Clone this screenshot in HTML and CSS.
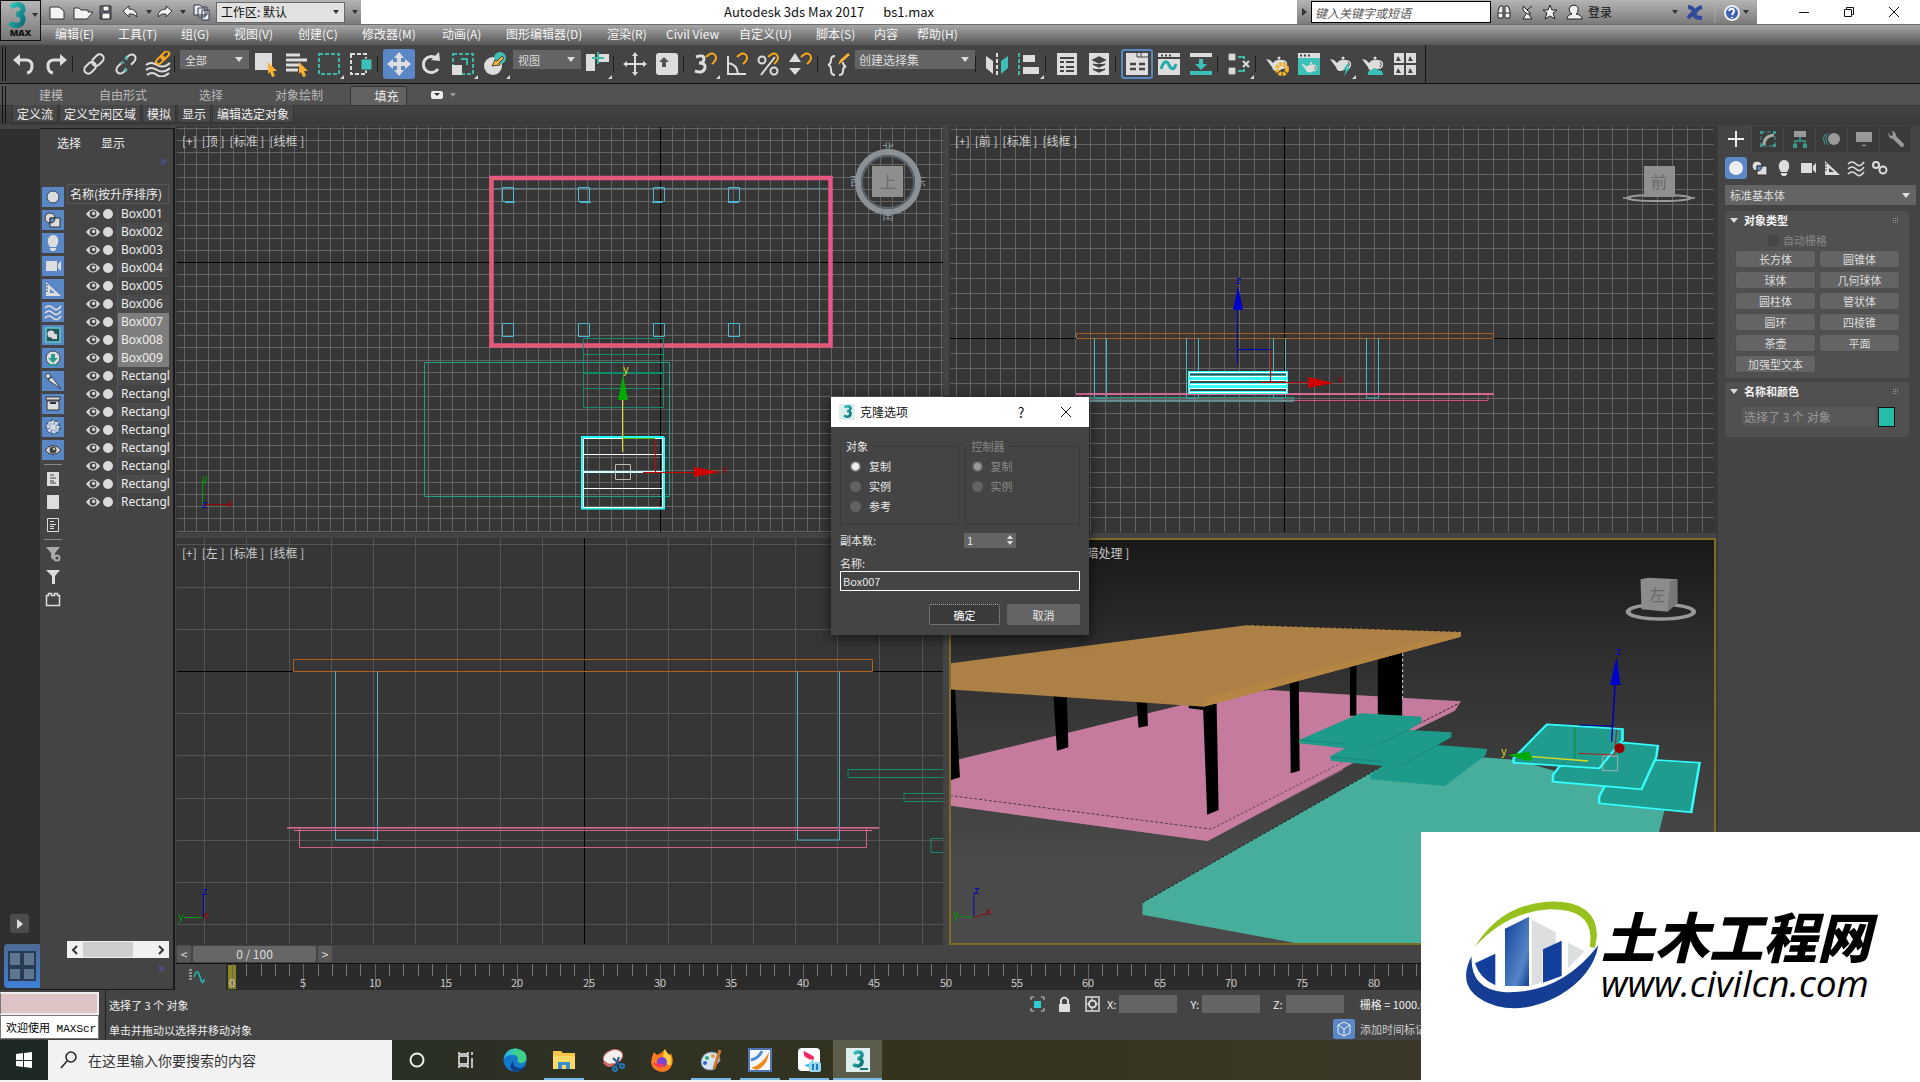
FILE: index.html
```html
<!DOCTYPE html>
<html lang="zh-CN">
<head>
<meta charset="utf-8">
<title>Autodesk 3ds Max 2017 - bs1.max</title>
<link rel="stylesheet" href="styles.css">
</head>
<body>
<svg class="defs" aria-hidden="true">
  <defs>
    <linearGradient id="teal" x1="0" y1="0" x2="1" y2="1"><stop offset="0" stop-color="#35c5bd"/><stop offset="1" stop-color="#0a6f78"/></linearGradient>
    <symbol id="eye" viewBox="0 0 14 10"><path d="M0 5Q7-4 14 5Q7 14 0 5Z" fill="#d8d8d8"/><circle cx="7" cy="5" r="3.400" fill="#444"/><circle cx="7.600" cy="4.400" r="1.600" fill="#d8d8d8"/></symbol>
    <symbol id="dot" viewBox="0 0 10 10"><circle cx="5" cy="5" r="5" fill="#dadada"/></symbol>
    <symbol id="three" viewBox="0 0 24 30"><path d="M5 6Q11 1 17 4Q21 8 17 12Q15 14 11 14Q18 14 19 19Q19 26 12 27Q7 27 4 24" fill="none" stroke="url(#teal)" stroke-width="6"/></symbol>
    <symbol id="teapot" viewBox="0 0 26 26"><path d="M2 8l4 1 3 3Q12 8 18 9Q24 9 23 15Q22 18 18 18q-2 2-6 2Q9 20 8 16Z" fill="#ddd"/><circle cx="15" cy="7" r="1.500" fill="#ddd"/><path d="M20 11q3 2 0 5" stroke="#444" fill="none"/></symbol>
    <symbol id="shapes" viewBox="0 0 22 20"><circle cx="8" cy="8" r="5" fill="#ddd" stroke="#333"/><path d="M8 8h10v9H8z" fill="#ddd" stroke="#333"/><path d="M8 8v5q5 0 5-5z" fill="#5b8bc8" stroke="#333"/></symbol>
    <symbol id="bulb" viewBox="0 0 22 20"><path d="M8 14Q5 10 6 6Q8 2 11 2Q15 2 16 6Q17 10 14 14Z" fill="#ddd"/><path d="M8 15h6v2h-1v1h-4v-1H8z" fill="#ddd"/></symbol>
    <symbol id="camera" viewBox="0 0 22 20"><path d="M4 5h11v10H4zM16 8l3-3v10l-3-3z" fill="#ddd"/></symbol>
    <symbol id="ruler" viewBox="0 0 22 20"><path fill-rule="evenodd" d="M4 3l15 14H4zM8 10v4h5z" fill="#ddd"/><path d="M4 6h2M4 9h2M4 12h2" stroke="#444"/></symbol>
    <symbol id="waves" viewBox="0 0 22 20"><path d="M3 6q4-4 8 0t8-2M3 11q4-4 8 0t8-2M3 16q4-4 8 0t8-2" fill="none" stroke="#ddd" stroke-width="1.600"/></symbol>
  </defs>
</svg>

<header class="head">
  <button class="app" aria-label="应用程序"><svg width="24" height="26"><use href="#three"/></svg><i class="caret dark"></i><b>MAX</b></button>
  <div class="title">
    <div class="qat">
      <svg width="94" height="22" viewBox="0 0 94 22"><g fill="#f4f4f4" stroke="#333"><path d="M1 6h9l5 4v8H1z"/><path d="M25 7h5l2 2h7v2h5l-6 7H25z"/><path d="M51 5h11v13H51z" fill="#667"/><path d="M54 5h6v5h-6zM53 12h8v6h-8z"/><path d="M74 10l6-5v3q8 0 8 8q-3-4-8-3v3z"/></g></svg>
      <i class="caret dark"></i>
      <svg width="22" height="22" viewBox="0 0 22 22"><path d="M17 10l-6-5v3q-8 0-8 8q3-4 8-3v3z" fill="#f4f4f4" stroke="#333"/></svg>
      <i class="caret dark"></i>
      <svg class="proj" width="20" height="22" viewBox="0 0 20 22"><g fill="#e8eef5" stroke="#334"><path d="M1 4h6l2 2h5v8H1zM5 7h7v9H5zM9 9h7v10H9z"/></g></svg>
      <button class="workspace">工作区: 默认<i class="caret dark"></i></button>
      <i class="caret dark bar"></i>
    </div>
    <h1><span>Autodesk 3ds Max 2017</span><span>bs1.max</span></h1>
    <div class="info">
      <i class="tri"></i>
      <input type="text" placeholder="键入关键字或短语" aria-label="搜索">
      <svg class="links" width="94" height="22" viewBox="0 0 94 22"><g fill="#f2f2f2" stroke="#222"><path d="M4 17v-7l2-5h3v12zM11 17V5h3l2 5v7z"/><path d="M4 12h5M11 12h5"/><path d="M29 5q-1 8 8 8zM32 13l-3 5h9l-3-4M33 9l5-4"/><path d="M56 4l2 5h5l-4 3 2 6-5-3-5 3 2-6-4-3h5z"/><path d="M73 18q0-4 5-5q-3-2-3-5q1-4 5-4q5 1 4 5q0 3-2 4q6 1 6 5z"/></g></svg>
      <span class="login">登录</span><i class="caret dark"></i>
      <svg class="links" width="62" height="22" viewBox="0 0 62 22"><path d="M7 6q5 0 6 5l-6 6M21 6q-5 1-7 6t7 5" fill="none" stroke="#2f4a9c" stroke-width="4"/><path d="M34 3v18" stroke="#aaa"/><circle cx="51" cy="12" r="7" fill="#3b62b5" stroke="#eee" stroke-width="2"/><path d="M48 10q1-3 4-2q2 2 0 4l-1 2M51 16v1" stroke="#fff" stroke-width="2" fill="none"/></svg>
      <i class="caret dark"></i>
    </div>
    <div class="win">
      <button aria-label="最小化"><svg width="12" height="12"><path d="M1 6.500h10" stroke="#111"/></svg></button>
      <button aria-label="还原"><svg width="12" height="12"><path d="M1.500 3.500h7v7h-7zM3.500 3v-1.500h7v7H9" fill="none" stroke="#111"/></svg></button>
      <button aria-label="关闭"><svg width="12" height="12"><path d="M1 1l10 10M11 1L1 11" stroke="#111"/></svg></button>
    </div>
  </div>
  <nav class="menu"><a href="#">编辑(E)</a><a href="#">工具(T)</a><a href="#">组(G)</a><a href="#">视图(V)</a><a href="#">创建(C)</a><a href="#">修改器(M)</a><a href="#">动画(A)</a><a href="#">图形编辑器(D)</a><a href="#">渲染(R)</a><a href="#">Civil View</a><a href="#">自定义(U)</a><a href="#">脚本(S)</a><a href="#">内容</a><a href="#">帮助(H)</a></nav>
</header>

<div class="tools">
  <i class="grip"></i>
  <div class="toolset">
  <button aria-label="撤消"><svg viewBox="0 0 26 26"><path d="M7 9h8q6 0 6 6t-5 7" class="s3"/><path d="M2 9l7-6v12z" class="f"/></svg></button>
  <button aria-label="重做"><svg viewBox="0 0 26 26"><path d="M19 9h-8q-6 0-6 6t5 7" class="s3"/><path d="M24 9l-7-6v12z" class="f"/></svg></button>
  <i class="sep"></i>
  <button aria-label="链接"><svg viewBox="0 0 26 26"><g transform="rotate(-45 13 13)" class="s"><rect x="1" y="9" width="13" height="8" rx="4"/><rect x="12" y="9" width="13" height="8" rx="4"/></g></svg></button>
  <button aria-label="断开"><svg viewBox="0 0 26 26"><g transform="rotate(-45 13 13)" class="s"><path d="M10 9H5q-4 1-4 4t4 4h5M16 9h5q4 1 4 4t-4 4h-5"/></g><path d="M13 5l1 4M12 17l1 4M8 11l3 1" class="st"/></svg></button>
  <button aria-label="绑定"><svg viewBox="0 0 26 26"><path d="M1 14q5-4 11 0t13-2M1 19q5-4 11 0t13-2M2 24q5-4 10 0t12-2" class="s"/><g transform="rotate(-45 18 7)" class="sy"><rect x="10" y="4" width="9" height="5" rx="2"/><rect x="17" y="4" width="9" height="5" rx="2"/></g></svg></button>
  <i class="sep"></i>
  <button class="combo c1">全部<i class="caret"></i></button>
  <button aria-label="选择"><svg viewBox="0 0 26 26"><path d="M3 2h17v17H3z" class="f"/><path d="M16 11l9 9h-4l2 5-3 1-2-5-2 2z" class="fy"/></svg></button>
  <button aria-label="按名称选择"><svg viewBox="0 0 26 26"><path d="M2 4h14M2 9h21M2 14h13M2 19h12" class="s3"/><path d="M15 11l9 9h-4l2 5-3 1-2-5-2 2z" class="fy"/></svg></button>
  <button aria-label="矩形区域"><svg viewBox="0 0 26 26"><path d="M3 3h20v20H3z" class="st" stroke-dasharray="4 2"/></svg><em></em></button>
  <button aria-label="窗口交叉"><svg viewBox="0 0 26 26"><path d="M3 3h15v20H3z" class="s" stroke-dasharray="4 2"/><path d="M13 8h11v11H13z" class="ft" stroke="#444"/></svg></button>
  <i class="sep"></i>
  <button class="on" aria-label="移动"><svg viewBox="0 0 26 26"><path d="M13 1l5 6h-3v4h4V8l6 5-6 5v-3h-4v4h3l-5 6-5-6h3v-4H7v3l-6-5 6-5v3h4V7H8z" class="f"/></svg></button>
  <button aria-label="旋转"><svg viewBox="0 0 26 26"><path d="M20 18a8 8 0 1 1-2-11" class="s3"/><path d="M13 9l9 1-1-9z" class="f"/></svg></button>
  <button aria-label="缩放"><svg viewBox="0 0 26 26"><path d="M3 3h20v20H3z" class="st" stroke-dasharray="4 2"/><path d="M2 14h10v10H2z" class="f"/><path d="M11 8h6v6" class="st"/></svg><em></em></button>
  <button aria-label="放置"><svg viewBox="0 0 26 26"><circle cx="11" cy="15" r="9" class="f"/><circle cx="18" cy="7" r="6" class="ft"/><path d="M10 15l3-6 2 1 5-5 2 2-5 5 1 2z" class="fy" stroke="#444"/></svg><em></em></button>
  <button class="combo c2">视图<i class="caret"></i></button>
  <button aria-label="轴心"><svg viewBox="0 0 26 26"><path d="M2 3h9v17H2zM14 3h11v8H14z" class="f"/><path d="M14 1v12M8 7h12" class="st"/></svg><em></em></button>
  <i class="sep"></i>
  <button aria-label="操纵"><svg viewBox="0 0 26 26"><path d="M13 4v18M4 13h18" class="s"/><path d="M13 1l3 4h-6zM13 25l3-4h-6zM1 13l4-3v6zM25 13l-4-3v6z" class="f"/><path d="M10 10h6v6h-6z" fill="#444"/><path d="M13 9v8M9 13h8" class="s"/></svg></button>
  <button aria-label="键盘"><svg viewBox="0 0 26 26"><rect x="2" y="2" width="22" height="22" rx="3" class="f"/><path d="M10 6l5 5h-3v5H8v-5H5z" fill="#555"/></svg></button>
  <i class="sep"></i>
  <button aria-label="捕捉"><svg viewBox="0 0 26 26"><path d="M4 6q8-3 8 2q0 4-5 4q7 0 6 5q-2 6-10 3" class="s3"/><path d="M14 6q6-6 9-2t-3 9" class="sy"/></svg><em></em></button>
  <button aria-label="角度"><svg viewBox="0 0 26 26"><path d="M4 5v18h18M4 12q9 1 10 11" class="s"/><path d="M13 6q6-6 9-2t-3 9" class="sy"/></svg></button>
  <button aria-label="百分比"><svg viewBox="0 0 26 26"><circle cx="6" cy="9" r="3.500" class="s"/><circle cx="18" cy="20" r="3.500" class="s"/><path d="M19 6L5 24" class="s"/><path d="M12 6q6-6 9-2t-3 9" class="sy"/></svg></button>
  <button aria-label="微调器"><svg viewBox="0 0 26 26"><path d="M7 2l6 9H1zM7 24l6-7H1z" class="f"/><path d="M13 6q6-6 9-2t-3 9" class="sy"/></svg></button>
  <i class="sep"></i>
  <button aria-label="选择集"><svg viewBox="0 0 26 26"><path d="M9 5q-4 0-4 4t-3 5q3 0 3 5t4 5M13 24q4 0 4-4t3-5q-3 0-3-4" class="s"/><path d="M12 14l2-5 8-7 2 2-8 7z" class="fy"/></svg></button>
  <button class="combo c3">创建选择集<i class="caret"></i></button>
  <i class="sep"></i>
  <button aria-label="镜像"><svg viewBox="0 0 26 26"><path d="M2 5l7 5v13l-7-6z" class="f"/><path d="M24 5l-7 5v13l7-6z" class="ft"/><path d="M13 2v23" class="s" stroke-dasharray="4 2"/></svg></button>
  <button aria-label="对齐"><svg viewBox="0 0 26 26"><path d="M3 2v23" class="st" stroke-dasharray="4 2"/><path d="M7 4h12v7H7zM7 16h16v7H7z" class="f"/></svg><em></em></button>
  <i class="sep"></i>
  <button aria-label="场景资源管理器"><svg viewBox="0 0 26 26"><path d="M3 2h20v22H3z" class="f"/><path d="M6 7h14M6 11h4M12 11h8M6 16h4M12 16h8M6 20h4M12 20h8" stroke="#444" stroke-width="2"/></svg></button>
  <button aria-label="层"><svg viewBox="0 0 26 26"><path d="M3 2h20v22H3z" class="f"/><path d="M13 6l6 3-6 3-6-3zM7 13l6 3 6-3M7 18l6 3 6-3" stroke="#444" fill="#444" stroke-width="1.500"/></svg></button>
  <i class="sep"></i>
  <button class="on ring" aria-label="功能区"><svg viewBox="0 0 26 26"><path d="M2 2h22v22H2z" class="f"/><path d="M13 2v4h11M17 2v4" stroke="#444" fill="none"/><path d="M6 13h6M15 13h6M6 18h6M15 18h6" stroke="#444" stroke-width="2.500"/></svg></button>
  <button aria-label="曲线编辑器"><svg viewBox="0 0 26 26"><path d="M2 2h22v22H2z" class="f"/><path d="M2 7h22M5 4.500h2M9 4.500h2M13 4.500h2" stroke="#444" stroke-width="2"/><path d="M5 18q4-12 8-4t7-1" stroke="#2aa" fill="none" stroke-width="3"/></svg></button>
  <button aria-label="摄影表"><svg viewBox="0 0 26 26"><path d="M2 2h22v4H2z" class="f"/><path d="M2 20h22v4H2zM11 8h4v5h4l-6 6-6-6h4z" class="ft"/></svg></button>
  <i class="sep"></i>
  <button aria-label="图解视图"><svg viewBox="0 0 26 26"><g class="s" stroke-width="1.500"><circle cx="6" cy="6" r="2.500"/><circle cx="6" cy="20" r="2.500"/><path d="M3 3l6 6M9 3L3 9M3 17l6 6M9 17l-6 6M17 10l6 6M23 10l-6 6"/></g><path d="M12 6h6v2M12 20h6v-2" class="st"/></svg><em></em></button>
  <i class="sep"></i>
  <button aria-label="渲染设置"><svg viewBox="0 0 26 26"><use href="#teapot"/><circle cx="18" cy="18" r="5" fill="none" stroke="#f5b52a" stroke-width="4" stroke-dasharray="3 1"/></svg></button>
  <button aria-label="渲染帧窗口"><svg viewBox="0 0 26 26"><path d="M2 2h22v22H2z" class="ft"/><path d="M2 2h22v5H2z" class="f"/><path d="M4 4.500h2M8 4.500h2M12 4.500h2" stroke="#444" stroke-width="2"/><use href="#teapot" x="4" y="7" width="19" height="19"/></svg></button>
  <button aria-label="渲染"><svg viewBox="0 0 26 26"><use href="#teapot"/><path d="M19 13l-4 6h3l-2 6 6-8h-3l2-4z" class="ft"/></svg><em></em></button>
  <button aria-label="云渲染"><svg viewBox="0 0 26 26"><use href="#teapot"/><path d="M8 24q-1-4 3-5q4-4 7 0q5 0 5 5z" class="ft"/></svg></button>
  <button aria-label="库"><svg viewBox="0 0 26 26"><path d="M2 2h10v10H2zM14 2h10v10H14zM2 14h10v10H2zM14 14h10v10H14z" class="f"/><path d="M4 10l2-5 3 5zM16 10l2-5 3 5zM4 22l2-5 3 5zM16 22l2-5 3 5z" fill="#444"/></svg></button>
  </div>
</div>

<div class="ribbon">
  <i class="grip"></i>
  <div class="tabs"><button>建模</button><button>自由形式</button><button>选择</button><button>对象绘制</button><button class="cur">填充</button><i class="pill"></i><i class="caret"></i></div>
  <div class="cmds"><button>定义流</button><button>定义空闲区域</button><button>模拟</button><button>显示</button><button>编辑选定对象</button></div>
</div>

<main class="main">
  <aside class="strip">
    <button class="play" aria-label="播放"><i></i></button>
    <button class="layout" aria-label="布局"><svg width="32" height="38" viewBox="0 0 32 38"><path d="M3 5h12v14H3zM17 5h12v14H17zM3 21h12v12H3zM17 21h12v12H17z" fill="#5f7690" stroke="#2a3a50" stroke-width="2"/></svg></button>
  </aside>

  <section class="explorer">
    <div class="extop"><a href="#">选择</a><a href="#">显示</a></div>
    <span class="more">»</span>
    <div class="exbody">
      <div class="filters">
        <button class="b"><svg viewBox="0 0 22 20"><circle cx="11" cy="10" r="6" fill="#ddd" stroke="#345"/></svg></button>
        <button class="b"><svg viewBox="0 0 22 20"><use href="#shapes"/></svg></button>
        <button class="b"><svg viewBox="0 0 22 20"><use href="#bulb"/></svg></button>
        <button class="b"><svg viewBox="0 0 22 20"><use href="#camera"/></svg></button>
        <button class="b"><svg viewBox="0 0 22 20"><use href="#ruler"/></svg></button>
        <button class="b"><svg viewBox="0 0 22 20"><use href="#waves"/></svg></button>
        <button class="b"><svg viewBox="0 0 22 20"><path d="M4 3h14v14H4z" fill="#2a5560" stroke="#5cd0c0" stroke-width="1.500"/><circle cx="9" cy="9" r="3.500" fill="#ddd"/><path d="M10 9h5v5h-5z" fill="#ddd"/></svg></button>
        <button class="b"><svg viewBox="0 0 22 20"><circle cx="11" cy="10" r="7" fill="#ddd" stroke="#345"/><path d="M9 6h4v4h3l-5 5-5-5h3zM6 16h10v2H6z" fill="#299c8a"/></svg></button>
        <button class="b"><svg viewBox="0 0 22 20"><circle cx="6" cy="5" r="2.500" fill="#ddd" stroke="#345"/><path d="M6 9l4-3 9 12z" fill="#ddd" stroke="#345"/></svg></button>
        <button class="b"><svg viewBox="0 0 22 20"><path d="M4 3h14v3H4zM5 7h12v9H5z" fill="#ddd" stroke="#333"/><path d="M8 9h6" stroke="#333" stroke-width="2"/></svg></button>
        <button class="b"><svg viewBox="0 0 22 20"><path d="M11 3v14M4 10h14M6 5l10 10M16 5L6 15" stroke="#ddd" stroke-width="1.500"/><circle cx="11" cy="10" r="5" fill="none" stroke="#ddd" stroke-width="2" stroke-dasharray="3 2"/><circle cx="11" cy="10" r="7" fill="none" stroke="#345" stroke-dasharray="3 2"/></svg></button>
        <button class="b"><svg viewBox="0 0 22 20"><path d="M3 10q8-9 16 0q-8 9-16 0z" fill="#ddd" stroke="#333"/><circle cx="11" cy="10" r="3.500" fill="#444"/><circle cx="12" cy="9" r="1" fill="#eee"/></svg></button>
        <hr>
        <button><svg viewBox="0 0 22 20"><path d="M5 3h12v14H5z" fill="#ddd"/><path d="M8 6h4M8 9h6M8 12h4M8 14h6" stroke="#444"/></svg></button>
        <button><svg viewBox="0 0 22 20"><path d="M5 3h12v14H5z" fill="#ddd"/></svg></button>
        <button><svg viewBox="0 0 22 20"><path d="M5.500 3.500h11v13h-11zM8 6.500h4M8 9.500h6M8 11.500h4M8 13.500h4" fill="none" stroke="#ddd"/></svg></button>
        <hr>
        <button><svg viewBox="0 0 22 20"><path d="M4 3h14l-5 6v8l-4-3V9z" fill="#aaa"/><circle cx="15" cy="14" r="2.500" fill="none" stroke="#aaa" stroke-width="2"/></svg></button>
        <button><svg viewBox="0 0 22 20"><path d="M4 3h14l-5 6v8h-3V9z" fill="#ddd"/></svg></button>
        <button><svg viewBox="0 0 22 20"><path d="M4.500 5.500h2v-2h3v2h3v-2h3v2h2v10h-13z" fill="none" stroke="#ddd" stroke-width="1.500"/></svg></button>
      </div>
      <div class="tree">
        <div class="th">名称(按升序排序)</div>
        <ul>
          <li><svg class="e"><use href="#eye"/></svg><svg class="d"><use href="#dot"/></svg><span>Box001</span></li>
          <li><svg class="e"><use href="#eye"/></svg><svg class="d"><use href="#dot"/></svg><span>Box002</span></li>
          <li><svg class="e"><use href="#eye"/></svg><svg class="d"><use href="#dot"/></svg><span>Box003</span></li>
          <li><svg class="e"><use href="#eye"/></svg><svg class="d"><use href="#dot"/></svg><span>Box004</span></li>
          <li><svg class="e"><use href="#eye"/></svg><svg class="d"><use href="#dot"/></svg><span>Box005</span></li>
          <li><svg class="e"><use href="#eye"/></svg><svg class="d"><use href="#dot"/></svg><span>Box006</span></li>
          <li class="sel"><svg class="e"><use href="#eye"/></svg><svg class="d"><use href="#dot"/></svg><span>Box007</span></li>
          <li class="sel"><svg class="e"><use href="#eye"/></svg><svg class="d"><use href="#dot"/></svg><span>Box008</span></li>
          <li class="sel"><svg class="e"><use href="#eye"/></svg><svg class="d"><use href="#dot"/></svg><span>Box009</span></li>
          <li><svg class="e"><use href="#eye"/></svg><svg class="d"><use href="#dot"/></svg><span>Rectangl</span></li>
          <li><svg class="e"><use href="#eye"/></svg><svg class="d"><use href="#dot"/></svg><span>Rectangl</span></li>
          <li><svg class="e"><use href="#eye"/></svg><svg class="d"><use href="#dot"/></svg><span>Rectangl</span></li>
          <li><svg class="e"><use href="#eye"/></svg><svg class="d"><use href="#dot"/></svg><span>Rectangl</span></li>
          <li><svg class="e"><use href="#eye"/></svg><svg class="d"><use href="#dot"/></svg><span>Rectangl</span></li>
          <li><svg class="e"><use href="#eye"/></svg><svg class="d"><use href="#dot"/></svg><span>Rectangl</span></li>
          <li><svg class="e"><use href="#eye"/></svg><svg class="d"><use href="#dot"/></svg><span>Rectangl</span></li>
          <li><svg class="e"><use href="#eye"/></svg><svg class="d"><use href="#dot"/></svg><span>Rectangl</span></li>
        </ul>
        <div class="hscroll"><svg width="8" height="10"><path d="M6 1L2 5l4 4" fill="none" stroke="#333" stroke-width="2"/></svg><i></i><svg width="8" height="10"><path d="M2 1l4 4-4 4" fill="none" stroke="#333" stroke-width="2"/></svg></div>
      </div>
    </div>
    <span class="more low">»</span>
  </section>

  <section class="stage">
    <div class="views">
      <div class="vp">
        <svg class="scene" viewBox="176 126 767 407" preserveAspectRatio="xMinYMin slice">
          <path class="grid" data-box="177 127 943 532" data-origin="660 262" data-step="12.21"/>
          <path d="M177 262.500H943M660.500 127V532" stroke="#000"/>
          <path d="M494 188.500H828M819.500 180V343" stroke="#5d7f88" fill="none"/>
          <rect x="491.500" y="178" width="339" height="167.500" fill="none" stroke="#e9568b" stroke-width="4.500"/>
          <path d="M491.500 345.500V178.500H828M494 345.500H829" fill="none" stroke="#d9624f"/>
          <g fill="none" stroke="#4fb6d2"><path d="M502.500 187.500h11v14h-11zM578.500 187.500h11v14h-11zM653.500 187.500h11v14h-11zM728.500 187.500h11v14h-11zM505 202.500h10M580 202.500h11M652 202.500h10M728 202.500h11M502.500 323.500h11v13h-11zM578.500 323.500h11v13h-11zM653.500 323.500h11v13h-11zM728.500 323.500h11v13h-11z"/></g>
          <g fill="none" stroke="#148a6c"><path d="M583.500 338.500h80v69h-80zM583 354.500h80M583 388.500h80"/><path d="M583 373h80" stroke-width="2"/><path d="M424.500 362.500h245v134h-245z" stroke="#20a084"/></g>
          <path d="M664 437V508.500H582V437H664" fill="none" stroke="#2ff" stroke-width="2"/>
          <path d="M583.500 438.500h79v69h-79zM584 454.500h79M584 488.500h79" fill="none" stroke="#fff"/><path d="M584 472h79" stroke="#cff" stroke-width="2"/>
          <path d="M655.500 440v32M643 472.500h54" stroke="#c00" fill="none"/><path d="M623 438.500h32" stroke="#6a0"/>
          <path d="M694 467l27 5-27 5z" fill="#c00"/><path d="M622.500 400v52" stroke="#dd2"/><path d="M623 375l5 25h-10z" fill="#0a0"/>
          <path d="M615.500 464.500h15v15h-15z" stroke="#bbb" fill="none"/>
          <text x="623" y="373" fill="#dd2">y</text><text x="722" y="473" fill="#900">x</text>
          <path d="M202.500 480v25" stroke="#090"/><path d="M203 504.500h28" stroke="#900"/><text x="202" y="482" fill="#090">y</text><text x="202" y="508" fill="#00b">z</text><text x="227" y="507" fill="#900">x</text>
          <circle cx="888" cy="182" r="30" fill="none" stroke="#8b9095" stroke-width="6"/><circle cx="888" cy="182" r="26" fill="none" stroke="#59636b" stroke-width="2"/>
          <path d="M872 166h31v31h-31z" fill="#8f8f8f"/><g class="cube"><text x="888" y="188">上</text></g>
          <g class="dir"><text x="888" y="153">北</text><text x="888" y="220">南</text><text x="856" y="186">西</text><text x="920" y="186">东</text></g>
        </svg>
        <div class="vl"><span>[+]</span><span>[顶 ]</span><span>[标准 ]</span><span>[线框 ]</span></div>
      </div>
      <div class="vp">
        <svg class="scene" viewBox="949 126 767 407" preserveAspectRatio="xMinYMin slice">
          <path class="grid" data-box="950 127 1714 532" data-origin="1284 338" data-step="14.93"/>
          <path d="M950 338.500H1714M1284.500 127V532" stroke="#000"/>
          <path d="M1076.500 333.500h417v5h-417z" fill="none" stroke="#b0601c"/>
          <g fill="none" stroke="#3fb9c4"><path d="M1094.500 338v60h12v-60M1186.500 338v60h12v-60M1273.500 338v60h12v-60M1366.500 338v60h12v-60"/></g>
          <path d="M1076 394h418" stroke="#d46a94" stroke-width="2"/><path d="M1080 394v6.500h408v-6" fill="none" stroke="#d4507c"/>
          <path d="M1085 397.500h209v4h-209" fill="none" stroke="#2a9487"/><path d="M1085 400.500h209" stroke="#7a8a96" stroke-width="2"/>
          <path d="M1188 371h100v23h-100z" fill="#3ff"/>
          <path d="M1190 374.500h96M1190 382h96M1190 390h96" stroke="#3a4a4c" stroke-width="2"/>
          <path d="M1189.500 372.500h97v4h-97zM1189.500 380.500h97v4h-97zM1189.500 388.500h97v4h-97z" fill="none" stroke="#fff"/>
          <path d="M1237.500 309v55M1238 349.500h33" stroke="#00b" fill="none"/><path d="M1238 286l5 24h-10z" fill="#00c"/><text x="1236" y="284" fill="#00c">z</text>
          <path d="M1270.500 350v32M1260 382.500h50" stroke="#b00" fill="none"/><path d="M1308 377l26 6-26 5z" fill="#c00"/><text x="1337" y="383" fill="#900">x</text>
          <path d="M1623 198h8M1687 198h8" stroke="#888" stroke-width="2"/><ellipse cx="1659" cy="198" rx="32" ry="3" fill="none" stroke="#999" stroke-width="2"/><path d="M1644 166h31v31h-31z" fill="#8f8f8f"/><g class="cube"><text x="1659" y="188">前</text></g>
        </svg>
        <div class="vl"><span>[+]</span><span>[前 ]</span><span>[标准 ]</span><span>[线框 ]</span></div>
      </div>
      <div class="vp">
        <svg class="scene" viewBox="176 538 767 407" preserveAspectRatio="xMinYMin slice">
          <path class="grid dim" data-box="177 538 943 944" data-origin="584 671" data-step="42.2"/>
          <path d="M177 671.500H943M584.500 538V944" stroke="#000"/>
          <path d="M293.500 659.500h579v12h-579z" fill="none" stroke="#b0601c"/>
          <path d="M335.500 671v169h42V671M797.500 671v169h42V671" fill="none" stroke="#4ab0c6"/>
          <path d="M287 827.500H879M294 830.500h578" stroke="#d8648c"/><path d="M287 828.500H879" stroke="#9a5a74"/><path d="M299.500 829v18.500h567V829" fill="none" stroke="#d4608c"/>
          <path d="M943 769.500h-95v8h95M943 793.500h-39v8h39M943 838.500h-12v14h12" fill="none" stroke="#168a70"/>
          <path d="M203.500 895v22" stroke="#00b"/><path d="M184 917.500h18" stroke="#090"/><text x="202" y="895" fill="#00b">z</text><text x="178" y="920" fill="#090">y</text><text x="203" y="919" fill="#900">x</text>
        </svg>
        <div class="vl"><span>[+]</span><span>[左 ]</span><span>[标准 ]</span><span>[线框 ]</span></div>
      </div>
      <div class="vp active">
        <svg class="scene" viewBox="951 540 763 403" preserveAspectRatio="xMinYMin slice">
          <g transform="translate(940 540) scale(.4975 .33333)">
            <path d="M407 1088L890 678L1090 652L1160 660L1460 790L1445 877L1400 1230H790L407 1124Z" fill="#48ae9c"/>
            <path d="M407 1088L890 678" stroke="#111" stroke-width="2" stroke-dasharray="6 5"/>
            <path d="M10 668L500 490L660 450L1047 484L1035 512L942 580L538 903L10 795Z" fill="#c47b9d"/>
            <path d="M10 765L545 868L1043 490" stroke="#111" stroke-width="2" stroke-dasharray="6 4" fill="none"/>
            <path d="M10 765L545 868L810 665V690L538 903L10 795Z" fill="#cb82a4" opacity=".5"/>
            <path d="M10 440H30L40 712L10 726ZM228 465H255L258 622L235 632ZM395 480L416 482L418 557L399 563ZM500 490H556L560 810L537 824L529 510L500 505ZM703 425L721 415L723 692L705 700ZM824 370H837V527H824ZM880 345L929 330V527H880Z" fill="#000"/>
            <path d="M930 340V480" stroke="#fff" stroke-width="2" stroke-dasharray="8 8"/>
            <path d="M10 372L620 255L1047 275V290L530 500L10 447Z" fill="#ad8046"/>
            <path d="M1047 275V290L556 490L530 500L530 475Z" fill="#b58543"/>
            <path d="M620 255L1047 275" stroke="#111" stroke-width="2" stroke-dasharray="5 6"/>
            <path d="M722 600L845 520L968 530V547L942 570L1028 577V592L1000 615L1100 627L1097 645L1015 738L865 718V705L890 678L785 662V648L815 625L722 610Z" fill="#1d9a8a"/>
            <path d="M942 570L862 625M1000 615L930 675M722 600L815 612M785 650L890 665" stroke="#158377" stroke-width="2"/>
            <g fill="#1f9c8e" stroke="#3ff" stroke-width="5"><path d="M1440 660L1527 668L1510 817L1325 790V770L1335 742Z"/><path d="M1375 608L1443 617L1440 650L1410 748L1232 725V705L1245 680Z"/><path d="M1220 553L1372 567V600L1325 685L1153 668V655Z"/></g>
            <path d="M1350 605L1357 430M1285 555L1350 558" stroke="#00b" stroke-width="3"/><path d="M1360 350L1368 435H1347Z" fill="#00c"/>
            <path d="M1276 565V655" stroke="#080" stroke-width="2"/><path d="M1283 640L1356 645M1356 645L1360 570" stroke="#c00" stroke-width="2"/><ellipse cx="1366" cy="625" rx="10" ry="15" fill="#900"/>
            <path d="M1140 645L1185 635L1190 660L1180 662Z" fill="#0a0"/><path d="M1190 650L1303 663" stroke="#dd2" stroke-width="4"/><path d="M1332 648H1362V692H1332Z" fill="none" stroke="#bbb" stroke-width="2"/>
            <ellipse cx="1449" cy="215" rx="66" ry="22" fill="none" stroke="#999" stroke-width="10"/><path d="M1408 118L1425 113L1482 118V190L1462 215L1410 208Z" fill="#8c8c8c"/><path d="M1468 122L1482 118V190L1462 215Z" fill="#777"/>
            <path d="M68 1060V1132" stroke="#00b" stroke-width="2"/><path d="M68 1132L35 1128" stroke="#090" stroke-width="2"/><path d="M68 1132L95 1120" stroke="#900" stroke-width="2"/>
          </g>
          <g class="cube"><text x="1657" y="601">左</text></g>
          <text x="1616" y="655" fill="#00c">z</text><text x="1501" y="755" fill="#dd2">y</text><text x="974" y="894" fill="#00b">z</text><text x="953" y="918" fill="#090">y</text><text x="986" y="915" fill="#900">x</text>
        </svg>
        <div class="vl"><span>[+]</span><span>[透视 ]</span><span>[标准 ]</span><span>[默认明暗处理 ]</span></div>
      </div>
    </div>
    <div class="slider"><button>&lt;</button><button class="thumb">0 / 100</button><button>&gt;</button></div>
    <div class="track">
      <svg width="50" height="25" viewBox="0 0 50 25"><path d="M13 6h3M13 9h3M13 12h3M13 15h3" stroke="#ddd"/><path d="M18 13q3-10 6 0t4 2" fill="none" stroke="#2bb" stroke-width="1.500"/></svg>
      <div class="ruler">
        <svg id="ticks" width="100%" height="25"></svg>
      </div>
    </div>
  </section>

  <aside class="panel">
    <div class="ptabs">
      <button class="cur" aria-label="创建"><svg viewBox="0 0 24 24"><path d="M12 4v16M4 12h16" stroke="#eee" stroke-width="2"/></svg></button>
      <button aria-label="修改"><svg viewBox="0 0 24 24"><path d="M5 5h14v14H5z" fill="none" stroke="#3a9a92" stroke-dasharray="4 2"/><path d="M8 18q0-9 10-10" fill="none" stroke="#aaa" stroke-width="3"/><path d="M4 4h3v3H4zM17 4h3v3h-3zM4 17h3v3H4zM17 17h3v3h-3z" fill="#3a9a92"/></svg></button>
      <button aria-label="层次"><svg viewBox="0 0 24 24"><path d="M6 4h12v6H6z" fill="#999"/><path d="M12 10v4M7 18v-4h10v4" fill="none" stroke="#3a9a92" stroke-width="1.500"/><path d="M5 17h4v4H5zM15 17h4v4h-4z" fill="#3a9a92"/></svg></button>
      <button aria-label="运动"><svg viewBox="0 0 24 24"><circle cx="14" cy="12" r="6" fill="#999"/><path d="M8 6q-4 6 0 12M5 7q-3 5 0 10" fill="none" stroke="#3a9a92"/></svg></button>
      <button aria-label="显示"><svg viewBox="0 0 24 24"><path d="M4 5h16v10H4zM9 19q3-3 6 0z" fill="#999"/></svg></button>
      <button aria-label="实用程序"><svg viewBox="0 0 24 24"><path d="M10 10l8 8" stroke="#999" stroke-width="4" stroke-linecap="round"/><path d="M5 5q-2 5 3 7q4 0 4-4q-1-4-4-4l1 4-3 1z" fill="#999"/></svg></button>
    </div>
    <div class="cats">
      <button class="on"><svg viewBox="0 0 22 20"><circle cx="11" cy="10" r="7" fill="#eee"/></svg></button>
      <button><svg viewBox="0 0 22 20"><use href="#shapes"/></svg></button>
      <button><svg viewBox="0 0 22 20"><use href="#bulb"/></svg></button>
      <button><svg viewBox="0 0 22 20"><use href="#camera"/></svg></button>
      <button><svg viewBox="0 0 22 20"><use href="#ruler"/></svg></button>
      <button><svg viewBox="0 0 22 20"><use href="#waves"/></svg></button>
      <button><svg viewBox="0 0 22 20"><g fill="none" stroke="#ddd" stroke-width="2"><circle cx="7" cy="7" r="3"/><circle cx="14" cy="12" r="3.500"/></g></svg></button>
    </div>
    <button class="combo wide">标准基本体<i class="caret"></i></button>
    <section class="roll">
      <h2><i class="caret"></i>对象类型<i class="dots"></i></h2>
      <label class="auto"><input type="checkbox" disabled>自动栅格</label>
      <div class="types"><button>长方体</button><button>圆锥体</button><button>球体</button><button>几何球体</button><button>圆柱体</button><button>管状体</button><button>圆环</button><button>四棱锥</button><button>茶壶</button><button>平面</button><button>加强型文本</button></div>
    </section>
    <section class="roll">
      <h2><i class="caret"></i>名称和颜色<i class="dots"></i></h2>
      <div class="namecol"><input type="text" value="选择了 3 个 对象" disabled aria-label="名称"><button aria-label="颜色"></button></div>
    </section>
  </aside>
</main>

<footer class="status">
  <div class="listener"><i></i><input type="text" value="欢迎使用 MAXScr" aria-label="侦听器"></div>
  <div class="msg"><p>选择了 3 个 对象</p><p>单击并拖动以选择并移动对象</p></div>
  <div class="coords">
    <div class="xyz">
      <svg width="74" height="18" viewBox="0 0 74 18"><path d="M1 5V2h3M11 2h3v3M14 13v3h-3M4 16H1v-3" fill="none" stroke="#ccc"/><path d="M4 6h7v7H4z" fill="#3cc"/><path d="M29 9h11v8H29z" fill="#ddd"/><path d="M31 9V5q3-5 7 0v4" fill="none" stroke="#ddd" stroke-width="2"/><path d="M56 2h13v14H56z" fill="none" stroke="#ddd" stroke-width="1.500"/><circle cx="62.500" cy="9" r="3.500" fill="none" stroke="#ddd" stroke-width="2"/><path d="M62 2v3M62 13v3M56 9h3M66 9h3" stroke="#ddd"/></svg>
      <label>X:<input type="text"></label><label>Y:<input type="text"></label><label>Z:<input type="text"></label><span>栅格 = 1000.0</span>
    </div>
    <div class="tag"><button aria-label="时间标记"><svg width="22" height="20" viewBox="0 0 22 20"><path d="M11 3l6 3v8l-6 3-6-3V6zM5 6l6 4 6-4M11 10v7" fill="none" stroke="#eee"/></svg></button><span>添加时间标记</span></div>
  </div>
</footer>

<nav class="taskbar">
  <button class="start" aria-label="开始"><svg width="16" height="16"><path d="M0 2l7-1v7H0zM8 1l8-1v8H8zM0 9h7v6l-7-1zM8 9h8v7l-8-1z" fill="#fff"/></svg></button>
  <label class="find"><svg width="18" height="18"><circle cx="11" cy="6" r="5" fill="none" stroke="#222" stroke-width="1.500"/><path d="M7 10l-6 7" stroke="#222" stroke-width="1.500"/></svg><input type="text" placeholder="在这里输入你要搜索的内容"></label>
  <button><svg viewBox="0 0 24 24"><circle cx="12" cy="12" r="6.500" fill="none" stroke="#eee" stroke-width="2"/></svg></button>
  <button><svg viewBox="0 0 24 24"><path d="M5 8h9v8H5zM5 4v2h9V4M5 20v-2h9v2M18 4v3M18 10v10" fill="none" stroke="#eee" stroke-width="1.500"/></svg></button>
  <button><svg viewBox="0 0 24 24"><circle cx="12" cy="12" r="11.500" fill="#1479c9"/><path d="M1 10Q4 0 13 .5Q24 2 23.500 11Q22 16 16 15Q14 14 15 11Q14 6 8 7Q3 7 1 10Z" fill="#3fd08c"/><path d="M1 10Q4 2 12 2Q7 5 8 7Q3 7 1 10Z" fill="#2bb6e0"/><path d="M10 13q0 6 6 7 4 0 6-2-3 6-10 5.500Q4 21 10 13Z" fill="#0d3f8f"/></svg></button>
  <button class="run"><svg viewBox="0 0 24 24"><path d="M1 3h8l2 2h12v16H1z" fill="#f6c544"/><path d="M1 8h22v13H1z" fill="#ffd968"/><path d="M6 21v-7h12v7h-4v-4h-4v4z" fill="#3a8fd0"/></svg></button>
  <button><svg viewBox="0 0 24 24"><ellipse cx="12" cy="9" rx="10" ry="7" fill="#f3f0ee" stroke="#c66" transform="rotate(-20 12 9)"/><path d="M3 14q5 6 9 2" stroke="#c66" stroke-width="3" fill="none"/><path d="M12 10l8 8M18 9l-4 11" stroke="#258" stroke-width="2"/><circle cx="21" cy="18" r="2" fill="none" stroke="#27b" stroke-width="2"/><circle cx="14" cy="21" r="2" fill="none" stroke="#27b" stroke-width="2"/></svg></button>
  <button><svg viewBox="0 0 24 24"><path d="M2 9L4 4l3 3Q12 5 15 1q2 5 5 6l1-2q3 7 1 12-3 7-10 7Q3 23 1 15z" fill="#ff7a1f"/><path d="M15 1q2 5 5 6 3 6 0 11l-6-4Q12 8 15 1z" fill="#ffd23d"/><circle cx="12" cy="14" r="5" fill="#7a45d6"/><path d="M2 15q5 0 8 1 3-1 4 1-3 4-7 2z" fill="#ff3d55"/></svg></button>
  <button class="run"><svg viewBox="0 0 24 24"><path d="M2 14Q3 5 12 4q9 0 9 8-1 4-5 4 2 5-3 6Q3 23 2 14z" fill="#d4e6f2" stroke="#789"/><circle cx="8" cy="10" r="2" fill="#3a7"/><circle cx="14" cy="8" r="2" fill="#e94"/><circle cx="6" cy="15" r="2" fill="#36c"/><path d="M21 2L15 21" stroke="#c8742c" stroke-width="3"/></svg></button>
  <button class="run"><svg viewBox="0 0 24 24"><path d="M1 1h22v22H1z" fill="#f7f8fb" stroke="#4f75b8" stroke-width="2"/><path d="M3 20Q15 16 21 4Q20 17 9 22" fill="#f08a1c"/><path d="M3 12q8-2 11-9" stroke="#4a8bd6" stroke-width="3" fill="none"/></svg></button>
  <button class="run"><svg viewBox="0 0 24 24"><rect x="1" width="22" height="23" rx="4" fill="#fff"/><path d="M7 3l9 5q2 2 0 4l-4-1q-7-3-5-8z" fill="#f2285f"/><path d="M7 17q8-1 9-6 1 6-3 9z" fill="#2bc4e8"/><rect x="12" y="14" width="12" height="10" rx="2" fill="#9cd6f2"/><path d="M16 16v6M20 16v6" stroke="#1a7fc0" stroke-width="2"/></svg></button>
  <button class="run front"><svg viewBox="0 0 24 24"><path d="M0 0h24v24H0z" fill="#dcefee"/><use href="#three" x="5" y="2" width="14" height="18"/><path d="M14 21h8" stroke="#177" stroke-width="2"/></svg></button>
</nav>

<form class="dialog" onsubmit="return false">
  <div class="dtitle"><svg width="16" height="16" viewBox="0 0 16 16"><path d="M0 0h16v16H0z" fill="#dcefee"/><use href="#three" x="3" y="1" width="11" height="13"/></svg><b>克隆选项</b><button type="button">?</button><button type="button" aria-label="关闭"><svg width="12" height="12"><path d="M1 1l10 10M11 1L1 11" stroke="#111"/></svg></button></div>
  <div class="dbody">
    <div class="groups">
      <fieldset><legend>对象</legend><label><input type="radio" name="obj" checked>复制</label><label><input type="radio" name="obj">实例</label><label><input type="radio" name="obj">参考</label></fieldset>
      <fieldset disabled><legend>控制器</legend><label><input type="radio" name="ctl" checked>复制</label><label><input type="radio" name="ctl">实例</label></fieldset>
    </div>
    <div class="copies"><label for="copies">副本数:</label><span class="spin"><input id="copies" type="text" value="1"><svg width="6" height="12"><path d="M3 1l3 4H0zM3 11l3-4H0z" fill="#ddd"/></svg></span></div>
    <label class="nm" for="nm">名称:</label>
    <input id="nm" type="text" value="Box007">
    <div class="acts"><button class="ok">确定</button><button type="button">取消</button></div>
  </div>
</form>

<div class="brand">
  <svg width="136" height="110" viewBox="196 244 408 330">
    <defs><linearGradient id="bl" x1="0" x2="1" y1="0" y2="1"><stop offset="0" stop-color="#123f9b"/><stop offset=".7" stop-color="#5585c5"/><stop offset="1" stop-color="#123f9b"/></linearGradient></defs>
    <path d="M396 303l72 38v40l-40 20v90l-32 10zM505 372l50 25-50 52z" fill="#dcdee0"/>
    <path d="M226 384Q300 262 440 249Q590 242 592 350L586 388L570 384Q590 270 450 272Q320 280 226 384Z" fill="#96c11f"/>
    <path d="M316 330L388 294V502H316Z" fill="url(#bl)"/><path d="M430 392L486 366V472L430 492Z" fill="#123f9b"/><path d="M226 434L287 405V500Q240 480 226 434Z" fill="#123f9b"/>
    <path d="M216 412Q210 510 310 520Q480 530 596 380Q580 470 480 530Q380 585 290 562Q160 520 216 412Z" fill="#153d94"/>
  </svg>
  <div class="bt"><strong>土木工程网</strong><span>www.civilcn.com</span></div>
</div>
<script src="grid.js"></script>
</body>
</html>
```
FILE: styles.css
```css
* { box-sizing: border-box; }
body { margin: 0; min-height: 100vh; display: flex; flex-direction: column; background: #444; color: #ddd; font: 12px/16px "Noto Sans CJK SC", "Noto Sans", sans-serif; overflow: hidden; position: relative; }
button, input { font: inherit; color: inherit; border: 0; padding: 0; margin: 0; background: none; border-radius: 0; min-width: 0; }
button { display: flex; align-items: center; justify-content: center; }
a { color: inherit; text-decoration: none; }
p, ul, h1, h2 { margin: 0; padding: 0; font-size: inherit; }
svg { display: block; flex: none; }
.defs { position: absolute; width: 0; height: 0; }
.caret { border: 4px solid transparent; border-top: 5px solid #ddd; border-bottom: 0; flex: none; }
.caret.dark { border-width: 3px; border-top: 4px solid #333; border-bottom: 0; }

.head { display: grid; grid-template-columns: 41px 1fr; grid-template-rows: 24px 21px; background: linear-gradient(#fff 24px, #333 24px, #a6a6a6 25px, #565656); }
.app { grid-row: 1 / 3; height: 41px; border: 1px solid #111; background: linear-gradient(#b5b5b5, #777); display: grid; grid-template-columns: 28px 8px; grid-template-rows: 27px 10px; justify-items: center; align-items: center; }
.app b { grid-column: 1 / 3; font: 900 9px/10px "Open Sans", sans-serif; color: #111; }
.title { display: flex; color: #111; }
.qat { flex: none; width: 320px; display: flex; align-items: center; gap: 3px; padding-left: 8px; background: linear-gradient(#b4b4b4, #7b7b7b); }
.proj { margin-left: 4px; }
.workspace { width: 129px; height: 21px; background: #e2e2e2; border: 1px solid #666; justify-content: space-between; padding: 0 5px 0 4px; color: #111; }
.bar { margin-left: 4px; }
h1 { flex: 1; display: flex; justify-content: flex-end; gap: 19px; padding-right: 363px; font-weight: 400; font-size: 13px; line-height: 23px; white-space: nowrap; }
.info { flex: none; width: 460px; display: flex; align-items: center; background: linear-gradient(#b4b4b4, #7b7b7b); }
.tri { border: 4px solid transparent; border-left: 5px solid #333; margin: 0 4px 0 5px; border-right: 0; }
.info input { width: 180px; height: 22px; background: #fff; border: 1px solid #000; padding: 0 3px; font-style: italic; }
.info input::placeholder { color: #555; }
.links { margin-left: 3px; }
.login { margin-right: 60px; }
.win { width: 163px; display: flex; justify-content: space-between; padding: 0 20px 0 41px; }
.menu { display: grid; grid-template-columns: 63px 63px 53px 64px 64px 80px 64px 101px 59px 73px 77px 58px 43px 60px; padding: 2px 0 0 14px; color: #f4f4f4; white-space: nowrap; }

.tools { display: flex; height: 39px; background: #444; border-bottom: 1px solid #111; }
.grip { width: 4px; margin: 2px 2px; border-left: 1px solid #111; border-right: 1px solid #111; flex: none; }
.toolset { display: flex; align-items: center; border-right: 1px solid #111; padding-right: 4px; }
.toolset > button { position: relative; width: 32px; height: 30px; }
.toolset svg { width: 26px; height: 26px; }
.toolset em { position: absolute; right: 1px; bottom: 0; border: 2px solid #ddd; border-top-color: transparent; border-left-color: transparent; }
.toolset .on { background: #5a87c6; border-radius: 3px; }
.toolset .ring { border: 2px solid #5a87c6; background: #444; }
.sep { width: 6px; height: 16px; border-left: 1px solid #1c1c1c; border-right: 1px solid transparent; background: none; }
.toolset > .combo { align-self: flex-start; margin-top: 5px; height: 19px; background: #646464; justify-content: space-between; padding: 0 6px 0 5px; font-size: 11px; }
.toolset > .c1 { width: 69px; }
.toolset > .c2 { width: 68px; margin-left: 2px; }
.toolset > .c3 { width: 120px; font-size: 12px; padding-left: 4px; }
.f { fill: #ddd; }
.ft { fill: #3cc0b8; }
.fy { fill: #f9b233; }
.s, .s3, .st, .sy { fill: none; stroke: #ddd; stroke-width: 2; }
.s3 { stroke-width: 3; }
.st { stroke: #3cb8a8; }
.sy { stroke: #f5a81c; }

.ribbon { display: grid; grid-template-columns: 9px 1fr; grid-template-rows: 21px 20px; background: linear-gradient(#525252 21px, #2a2a2a 21px, #444 22px, #3a3a3a); }
.ribbon .grip { grid-row: 1 / 3; }
.tabs { display: flex; align-items: center; color: #bbb; }
.tabs button { margin-left: 36px; }
.tabs button:first-child { margin-left: 30px; }
.tabs button:nth-child(3), .tabs button:nth-child(4) { margin-left: 52px; }
.tabs .cur { margin-left: 27px; width: 57px; height: 19px; align-self: flex-end; border: 1px solid #333; border-bottom: 0; background: #626262; color: #eee; padding-left: 16px; }
.pill { width: 12px; height: 8px; background: #eee; border-radius: 2px; margin: 0 7px 0 24px; display: flex; }
.pill::after { content: ""; margin: 2px auto 0; height: 0; border: 3px solid transparent; border-top-color: #333; }
.tabs > .caret { border-width: 3px; border-top: 4px solid #999; border-bottom: 0; }
.cmds { display: flex; gap: 1px; padding-left: 3px; }
.cmds button { border: 1px solid #333; border-top: 0; height: 18px; padding: 0 4px; color: #eee; background: #484848; }

.main { flex: 1; display: grid; grid-template-columns: 40px 135px 1fr 204px; min-height: 0; }
.strip { background: #2f2f2f; display: flex; flex-direction: column; align-items: flex-start; justify-content: flex-end; gap: 11px; padding: 0 0 2px 4px; border-top: 4px solid #444; }
.play { width: 19px; height: 19px; background: #4c4c4c; border-radius: 3px; margin-left: 6px; }
.play i { border: 5px solid transparent; border-left: 6px solid #ddd; border-right: 0; }
.layout { width: 36px; height: 44px; background: linear-gradient(#4d6a94, #3f7fd6); border-radius: 4px 0 0 4px; }
.explorer { background: #444; border: 1px solid #191919; border-width: 1px 2px 1px 0; margin-top: 3px; display: flex; flex-direction: column; }
.extop { display: flex; gap: 20px; padding: 6px 0 0 17px; color: #eee; }
.more { color: #5454b4; font-size: 15px; text-align: right; padding-right: 6px; line-height: 18px; }
.exbody { flex: 1; display: flex; padding-top: 15px; min-height: 0; }
.more.low { padding: 0 8px 13px 0; }
.filters { width: 27px; padding: 3px 0 0 2px; display: flex; flex-direction: column; gap: 3px; }
.filters button { width: 22px; height: 20px; }
.filters button svg { width: 22px; height: 20px; }
.filters .b { background: #5a87c6; }
.filters hr { width: 18px; height: 1px; margin: 1px 2px; border: 0; background: #888; }
.tree { width: 102px; display: flex; flex-direction: column; }
.th { border: 1px solid #555; height: 20px; padding-left: 2px; line-height: 18px; color: #eee; white-space: nowrap; }
.tree ul { list-style: none; flex: 1; padding-top: 1px; }
.tree li { display: flex; align-items: center; height: 18px; padding-left: 19px; }
.tree .e { width: 14px; height: 10px; margin-right: 3px; }
.tree .d { width: 10px; height: 10px; margin-right: 4px; }
.tree span { width: 52px; padding-left: 3px; color: #eee; border-left: 1px solid #555; font: 12px/18px "Noto Sans", sans-serif; }
.tree li:nth-child(even) span { background: #4b4b4b; }
.tree .sel span, .tree .sel:nth-child(even) span { background: #7e7e7e; }
.hscroll { height: 17px; background: #f0f0f0; display: flex; align-items: center; justify-content: space-between; padding: 0 4px; }
.hscroll i { width: 50px; height: 15px; background: #cdcdcd; margin-right: 20px; }

.stage { display: flex; flex-direction: column; padding: 1px 0 0 1px; min-width: 0; }
.views { flex: 1; display: grid; grid-template-columns: 1fr 1fr; grid-template-rows: 1fr 1fr; gap: 5px 6px; min-height: 0; }
.vp { position: relative; background: #363636; overflow: hidden; min-height: 0; }
.vp.active { background: linear-gradient(#181818, #303030 30%, #4a4a4a 80%); border: 2px solid #7d6c22; }
.scene { position: absolute; inset: 0; width: 100%; height: 100%; }
.scene text { font: 11px "Noto Sans CJK SC", sans-serif; }
.scene .cube text { font-size: 16px; fill: #6a6a6a; text-anchor: middle; }
.scene .dir text { font-size: 12px; fill: #8d979d; text-anchor: middle; }
.grid { fill: none; stroke: #646464; }
.grid.dim { stroke: #545454; }
.vl { position: absolute; left: 6px; top: 7px; display: flex; gap: 5px; color: #ccc; white-space: nowrap; }
.vp.active .vl { left: 2px; top: 5px; gap: 3px; }
.slider { height: 18px; display: flex; gap: 2px; padding: 1px 0 0 1px; }
.slider button { width: 14px; height: 16px; background: #585858; border-radius: 2px; }
.slider .thumb { width: 123px; background: #666; }
.track { height: 27px; display: flex; border-top: 1px solid #111; }
.ruler { flex: 1; background: #2b2b2b; overflow: hidden; }
.ruler text { font: 11px "Noto Sans CJK SC", sans-serif; fill: #ccc; text-anchor: middle; }

.panel { padding: 1px 4px 0 7px; border-left: 2px solid #3a3a3a; display: flex; flex-direction: column; align-items: stretch; }
.ptabs { display: flex; margin-left: -5px; }
.ptabs button { width: 32px; height: 26px; background: #3a3a3a; border-right: 1px solid #4a4a4a; }
.ptabs svg { width: 24px; height: 24px; }
.ptabs .cur { background: #444; }
.cats { display: flex; gap: 2px; padding: 5px 0 6px; }
.cats button, .cats svg { width: 22px; height: 22px; }
.cats .on { background: #5a87c6; border-radius: 3px; }
.wide { height: 20px; background: #646464; justify-content: space-between; padding: 0 6px 0 5px; font-size: 11px; margin-bottom: 6px; }
.roll { background: #505050; border-radius: 3px; margin: 0 7px 4px 0; padding: 0 10px 6px 11px; font-size: 11px; }
.roll h2 { display: flex; align-items: center; height: 18px; gap: 6px; margin-left: -6px; color: #f4f4f4; font-size: 11px; }
.dots { width: 6px; height: 6px; margin-left: auto; background: repeating-linear-gradient(#505050 0 1px, transparent 1px 2px), repeating-linear-gradient(90deg, #999 0 1px, #505050 1px 2px); }
.auto { display: flex; align-items: center; gap: 4px; color: #888; margin: 3px 0; padding-left: 32px; }
.auto input { appearance: none; width: 11px; height: 11px; background: #464646; }
.types { display: grid; grid-template-columns: 1fr 1fr; gap: 5px; }
.types button { height: 16px; background: #646464; border-radius: 2px; color: #ddd; box-shadow: 0 0 1px #333; }
.namecol { display: flex; gap: 3px; padding: 7px 4px 4px 6px; }
.namecol input { flex: 1; height: 19px; color: #999; background: #585858; padding: 0 2px; font-size: 12px; }
.namecol button { width: 17px; height: 20px; background: #24bda5; border: 1px solid #111; }

.status { height: 50px; display: flex; font-size: 11px; color: #eee; }
.listener { width: 106px; padding: 2px 6px 1px 0; border-right: 1px solid #222; flex: none; }
.listener i { display: block; height: 23px; background: #dcc4c4; border: 2px solid #eee; border-left: 1px solid #777; }
.listener input { width: 99px; height: 24px; background: #fff; border: 1px solid #777; color: #000; padding-left: 5px; font: 11px "Liberation Mono", "Noto Sans CJK SC", monospace; }
.msg { padding: 7px 0 0 3px; display: grid; row-gap: 9px; align-content: start; }
.coords { margin-left: auto; width: 890px; padding-top: 5px; }
.xyz { display: flex; align-items: center; height: 18px; }
.xyz svg { margin-right: 3px; }
.xyz label { display: flex; align-items: center; gap: 3px; margin-right: 13px; }
.xyz input { width: 58px; height: 18px; background: #646464; }
.xyz span { margin-left: 3px; }
.tag { display: flex; align-items: center; gap: 5px; padding-left: 303px; margin-top: 6px; color: #ccc; }
.tag button { width: 22px; height: 20px; background: #5a87c6; border-radius: 2px; }

.taskbar { height: 42px; display: flex; border-bottom: 2px solid #f4f4f4; background: linear-gradient(90deg, #1d2824, #2c3024 25%, #35341f 50%, #3c3828 75%); }
.taskbar button { width: 49px; }
.taskbar button svg { width: 24px; height: 24px; }
.taskbar .start { width: 48px; }
.taskbar .start svg { width: 16px; height: 16px; }
.find { width: 344px; background: #f2f2f2; display: flex; align-items: center; gap: 10px; padding-left: 12px; }
.find input { flex: 1; color: #333; font-size: 14px; }
.find input::placeholder { color: #333; opacity: 1; }
.run { background: linear-gradient(#7ab8ea, #7ab8ea) center bottom / 40px 2px no-repeat; }
.taskbar .front { background: linear-gradient(#7ab8ea, #7ab8ea) center bottom / 100% 2px no-repeat, #5c5c4c; }

.dialog { position: absolute; left: 831px; top: 397px; width: 258px; background: #444; color: #e8e8e8; font-size: 11px; box-shadow: 0 3px 12px #000a; }
.dtitle { height: 30px; background: #fff; color: #111; display: flex; align-items: center; padding: 0 8px; font-size: 12px; }
.dtitle b { flex: 1; font-weight: 400; padding-left: 5px; font-size: 12px; }
.dtitle button { width: 30px; margin-left: 15px; font-size: 14px; }
.dbody { padding: 12px 9px 10px; }
.groups { display: flex; gap: 6px; }
fieldset { flex: 1; height: 86px; margin: 0; border: 1px solid #393939; padding: 4px 9px 0; }
fieldset:disabled { padding-left: 6px; }
legend { padding: 0 4px; margin-left: -8px; line-height: 15px; }
fieldset:disabled legend { margin-left: -4px; }
fieldset label { display: flex; align-items: center; gap: 8px; height: 16px; margin-bottom: 4px; }
fieldset input { appearance: none; width: 11px; height: 11px; border-radius: 50%; background: #626262; }
fieldset input:checked { background: radial-gradient(#eee 0 3px, #626262 5px); }
fieldset:disabled { color: #888; }
fieldset:disabled input:checked { background: radial-gradient(#999 0 3px, #5a5a5a 5px); }
.copies { display: grid; grid-template-columns: 124px 52px; margin-top: 7px; align-items: center; }
.spin { background: #646464; height: 15px; display: flex; align-items: center; padding: 0 3px; }
.spin input { flex: 1; width: 30px; }
.nm { display: block; margin: 7px 0 0; }
#nm { width: 100%; height: 20px; border: 1px solid #fff; padding: 0 2px; font-size: 11px; display: block; }
.acts { display: flex; justify-content: flex-end; gap: 7px; margin-top: 13px; }
.acts button { width: 73px; height: 21px; background: #646464; border-radius: 2px; }
.acts .ok { width: 71px; background: #3a3a3a; border: 1px dotted #aaa; color: #fff; }

.brand { position: absolute; right: 0; bottom: 0; width: 499px; height: 250px; background: #fff; color: #000; display: flex; align-items: center; padding: 0 0 4px 44px; }
.bt { display: flex; flex-direction: column; white-space: nowrap; }
.bt strong { font: italic 900 54px/56px "Noto Sans CJK SC", sans-serif; }
.bt span { font: italic 37px/40px "Open Sans", sans-serif; }
```
FILE: grid.js
```js
// Construction grid lines of each wireframe viewport.
document.querySelectorAll('.grid').forEach(function (p) {
  var b = p.dataset.box.split(' ').map(Number);
  var o = p.dataset.origin.split(' ').map(Number);
  var s = Number(p.dataset.step);
  var d = '';
  for (var i = Math.ceil((b[0] - o[0]) / s); o[0] + i * s < b[2]; i++) {
    d += 'M' + (Math.round(o[0] + i * s) + 0.5) + ' ' + b[1] + 'V' + b[3];
  }
  for (var j = Math.ceil((b[1] - o[1]) / s); o[1] + j * s < b[3]; j++) {
    d += 'M' + b[0] + ' ' + (Math.round(o[1] + j * s) + 0.5) + 'H' + b[2];
  }
  p.setAttribute('d', d);
});

// Frame ruler: one tick per frame, a number every five frames.
var ticks = document.getElementById('ticks');
var out = '<rect x="2" y="1" width="8" height="24" fill="#8f8526"/>';
for (var f = 0; f <= 100; f++) {
  var x = Math.round(6 + f * 14.27);
  out += '<path d="M' + (x + 0.5) + ' 0v' + (f % 5 ? 12 : 25) + '" stroke="' + (f % 5 ? '#777' : '#666') + '"/>';
  if (f % 5 === 0) out += '<text x="' + x + '" y="23">' + f + '</text>';
}
ticks.innerHTML = out;
```
